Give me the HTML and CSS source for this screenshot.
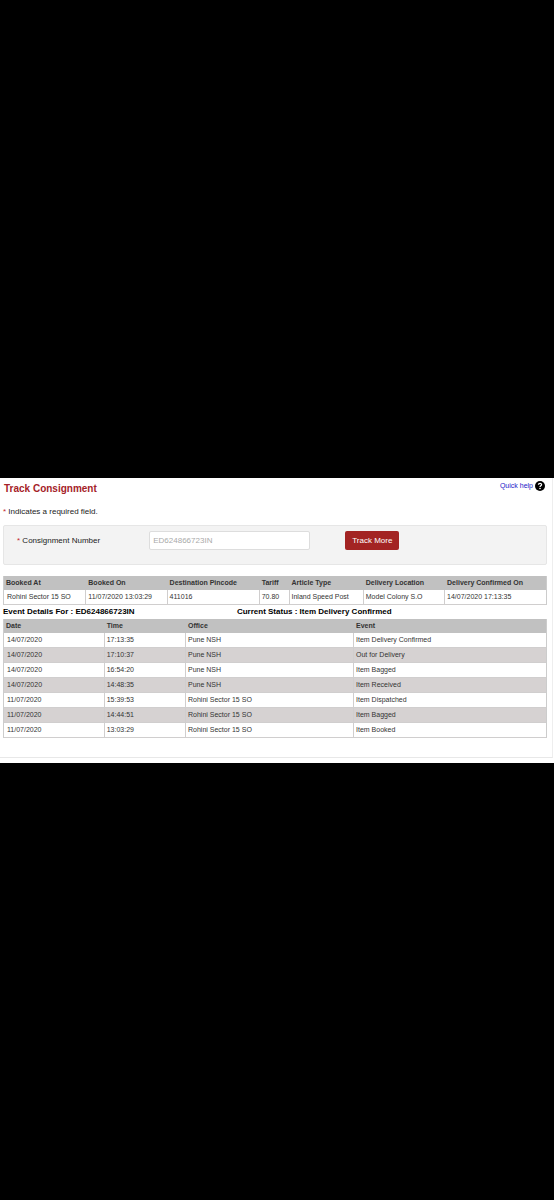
FILE: index.html
```html
<!DOCTYPE html>
<html lang="en">
<head>
<meta charset="utf-8">
<meta name="viewport" content="width=device-width, initial-scale=1">
<title>Track Consignment</title>
<link rel="stylesheet" href="styles.css">
</head>
<body>
<main class="sheet">
  <div class="panel">
    <header class="top">
      <h1 class="title">Track Consignment</h1>
      <a class="help" href="#">Quick help
        <svg class="help-icon" viewBox="0 0 20 20" aria-hidden="true"><circle cx="10" cy="10" r="10" fill="#000"/><path d="M6.8 7.5C7 3.7 13.2 3.8 13.2 7.3C13.2 9.6 10 9.6 10 12" fill="none" stroke="#fff" stroke-width="2.5"/><circle cx="10" cy="15" r="1.6" fill="#fff"/></svg>
      </a>
    </header>
    <p class="note"><span class="star">*</span> Indicates a required field.</p>
    <form class="search">
      <label class="label" for="number"><span class="star">*</span> Consignment Number</label>
      <input class="number" id="number" type="text" placeholder="ED624866723IN">
      <button class="more" type="button">Track More</button>
    </form>
    <table class="grid booking">
      <colgroup><col class="b1"><col class="b2"><col class="b3"><col class="b4"><col class="b5"><col class="b6"><col></colgroup>
      <thead><tr><th>Booked At</th><th>Booked On</th><th>Destination Pincode</th><th>Tariff</th><th>Article Type</th><th>Delivery Location</th><th>Delivery Confirmed On</th></tr></thead>
      <tbody><tr><td>Rohini Sector 15 SO</td><td>11/07/2020 13:03:29</td><td>411016</td><td>70.80</td><td>Inland Speed Post</td><td>Model Colony S.O</td><td>14/07/2020 17:13:35</td></tr></tbody>
    </table>
    <div class="status"><span>Event Details For : ED624866723IN</span><span>Current Status : Item Delivery Confirmed</span></div>
    <table class="grid events">
      <colgroup><col class="e1"><col class="e2"><col class="e3"><col></colgroup>
      <thead><tr><th>Date</th><th>Time</th><th>Office</th><th>Event</th></tr></thead>
      <tbody>
        <tr><td>14/07/2020</td><td>17:13:35</td><td>Pune NSH</td><td>Item Delivery Confirmed</td></tr>
        <tr><td>14/07/2020</td><td>17:10:37</td><td>Pune NSH</td><td>Out for Delivery</td></tr>
        <tr><td>14/07/2020</td><td>16:54:20</td><td>Pune NSH</td><td>Item Bagged</td></tr>
        <tr><td>14/07/2020</td><td>14:48:35</td><td>Pune NSH</td><td>Item Received</td></tr>
        <tr><td>11/07/2020</td><td>15:39:53</td><td>Rohini Sector 15 SO</td><td>Item Dispatched</td></tr>
        <tr><td>11/07/2020</td><td>14:44:51</td><td>Rohini Sector 15 SO</td><td>Item Bagged</td></tr>
        <tr><td>11/07/2020</td><td>13:03:29</td><td>Rohini Sector 15 SO</td><td>Item Booked</td></tr>
      </tbody>
    </table>
  </div>
</main>
</body>
</html>
```
FILE: styles.css
```css
* { box-sizing: border-box; }
body {
  margin: 0;
  min-height: 100vh;
  display: flex;
  flex-direction: column;
  justify-content: center;
  padding-top: 40px;
  background: #000;
  color: #333;
  font-family: "Liberation Sans", Arial, sans-serif;
  font-size: 8px;
}
.sheet { padding: 0 1px 5px 0; background: #fff; }
.panel {
  padding: 3px 5px 19px 3px;
  border-right: 1px solid #eee;
  border-bottom: 1px solid #e8e8e8;
}
.top { display: flex; justify-content: space-between; align-items: flex-start; }
.title { margin: 0; padding: 2px 1px 0; font-size: 10px; line-height: 12px; color: #a52228; }
.help {
  display: flex;
  align-items: center;
  gap: 2px;
  padding-right: 2px;
  font-size: 7px;
  line-height: 10px;
  color: #2417c8;
  text-decoration: none;
}
.help-icon { width: 10px; height: 10px; }
.note { margin: 12px 0 8px; line-height: 10px; color: #222; }
.star { color: #c4282e; }
.search {
  display: grid;
  grid-template-columns: 25% 31% 1fr;
  align-items: start;
  padding: 5px 0 13px 13px;
  border: 1px solid #e6e6e6;
  border-radius: 2px;
  background: #f3f3f3;
}
.label { line-height: 20px; color: #222; }
.number {
  width: 98%;
  height: 19px;
  padding: 0 3px;
  border: 1px solid #ddd;
  border-radius: 2px;
  background: #fff;
  font: inherit;
}
.number::placeholder { color: #aaa; opacity: 1; }
.more {
  justify-self: start;
  height: 19px;
  margin-left: 32px;
  padding: 0 7px;
  border: 0;
  border-radius: 2px;
  background: #a32423;
  color: #fff;
  font: inherit;
}
.grid {
  width: 100%;
  table-layout: fixed;
  border-spacing: 0;
  border: 1px solid #ccc;
  border-width: 0 1px;
  font-size: 7px;
}
.grid th, .grid td { text-align: left; white-space: nowrap; line-height: 14px; }
.grid th { padding: 0 2px; background: #c1c1c1; }
.grid th + th { padding-left: 3px; }
.grid td { height: 15px; padding: 0 3px; border-bottom: 1px solid #d0cece; }
.grid td + td { padding-left: 2px; border-left: 1px solid #d0cece; }
.booking { margin-top: 11px; }
.events tbody tr:nth-child(even) { background: #d6d2d2; }
.b1, .b2, .b6, .e2 { width: 15%; }
.b3 { width: 17%; }
.b4 { width: 5.5%; }
.b5 { width: 13.7%; }
.e1 { width: 18.4%; }
.e3 { width: 31%; }
.status { display: grid; grid-template-columns: 43% 1fr; line-height: 14px; font-weight: bold; color: #000; }
```
